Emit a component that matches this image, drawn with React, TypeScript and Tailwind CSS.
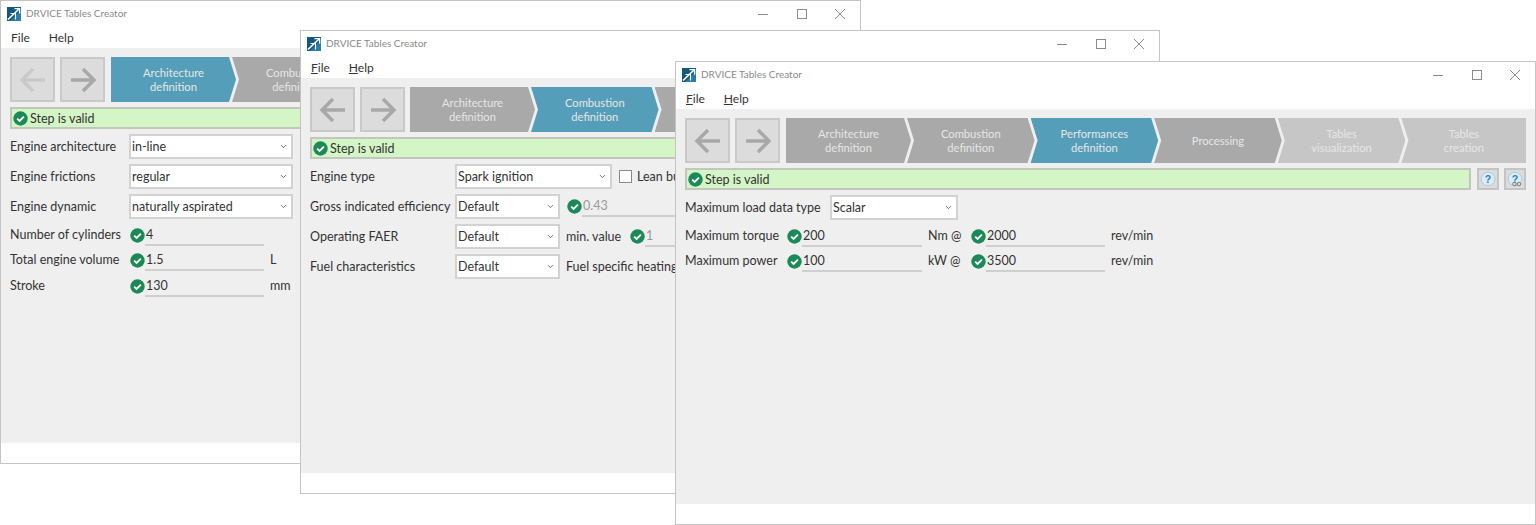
import type { ReactNode } from 'react';
import { ChevronDown } from 'lucide-react';

const STEPS = [
  ['Architecture', 'definition'],
  ['Combustion', 'definition'],
  ['Performances', 'definition'],
  ['Processing'],
  ['Tables', 'visualization'],
  ['Tables', 'creation'],
];

function Logo() {
  return (
    <svg width="14" height="14" viewBox="0 0 14 14" className="shrink-0">
      <rect width="14" height="14" fill="#14587c" />
      <path d="M14 3 V14 H3 Z" fill="#2a7ba6" />
      <path d="M1 12.5 L12 2" fill="none" stroke="#fff" strokeWidth="1.6" />
      <path d="M7.5 1.6 H12.6 V6.5" fill="none" stroke="#fff" strokeWidth="1.3" />
      <path d="M3.5 6.5 H8.5 L8.5 12.5" fill="none" stroke="#fff" strokeWidth="1.1" />
    </svg>
  );
}

function WindowControls() {
  return (
    <div className="flex items-center gap-[28.5px] pr-[15px] text-[#8c8c8c]">
      <svg width="10" height="10" viewBox="0 0 10 10"><path d="M0 5.5 H10" stroke="currentColor" /></svg>
      <svg width="10" height="10" viewBox="0 0 10 10"><rect x="0.5" y="0.5" width="9" height="9" fill="none" stroke="currentColor" /></svg>
      <svg width="10" height="10" viewBox="0 0 10 10"><path d="M0 0 L10 10 M10 0 L0 10" stroke="currentColor" /></svg>
    </div>
  );
}

function CheckIcon() {
  return (
    <svg width="15" height="15" viewBox="0 0 15 15" className="shrink-0">
      <circle cx="7.5" cy="7.5" r="7.2" fill="#1b8a58" />
      <path d="M4.2 7.6 L6.6 9.9 L10.9 5.6" fill="none" stroke="#fff" strokeWidth="1.8" />
    </svg>
  );
}

function NavButton({ direction, faded }: { direction: 'left' | 'right'; faded?: boolean }) {
  return (
    <div className="flex h-[45px] w-[45px] shrink-0 items-center justify-center border-2 border-[#c9c9c9] bg-[#dcdcdc]">
      <svg width="28" height="28" viewBox="0 0 28 28" className={faded ? 'text-[#c9c9c9]' : 'text-[#a8a8a8]'}>
        {direction === 'left' ? (
          <path d="M26 14 H3 M14 3 L3 14 L14 25" fill="none" stroke="currentColor" strokeWidth="3.4" />
        ) : (
          <path d="M2 14 H25 M14 3 L25 14 L14 25" fill="none" stroke="currentColor" strokeWidth="3.4" />
        )}
      </svg>
    </div>
  );
}

function Steps({ active, tight }: { active: number; tight?: boolean }) {
  return (
    <div className={`flex h-[45px] flex-1 ${tight ? '' : 'ml-[1px]'}`}>
      {STEPS.map((lines, i) => {
        let color = 'bg-[#a9a9a9]';
        if (i === active) color = 'bg-[#559eb9]';
        else if (i > 3) color = 'bg-[#c6c6c6]';
        let shape = 'w-[127.6px] [clip-path:polygon(0_0,calc(100%_-_7px)_0,100%_50%,calc(100%_-_7px)_100%,0_100%,7px_50%)]';
        if (i === 0) shape = 'w-[125px] [clip-path:polygon(0_0,calc(100%_-_7px)_0,100%_50%,calc(100%_-_7px)_100%,0_100%)]';
        if (i === STEPS.length - 1) shape = 'w-[125px] [clip-path:polygon(0_0,100%_0,100%_100%,0_100%,7px_50%)]';
        return (
          <div
            key={i}
            className={`flex shrink-0 flex-col items-center justify-center text-[11.2px] leading-[14px] text-[#e6e6e6] ${i > 0 ? '-ml-[4px]' : ''} ${color} ${shape}`}
          >
            {lines.map((line) => (
              <span key={line}>{line}</span>
            ))}
          </div>
        );
      })}
    </div>
  );
}

function HelpButton({ extra }: { extra?: boolean }) {
  return (
    <div className="ml-[5.5px] flex h-[22px] w-[22px] shrink-0 items-center justify-center border-2 border-[#c4c4c4] bg-[#dcdcdc]">
      <svg width="16" height="16" viewBox="0 0 16 16">
        <circle cx="8" cy="8" r="6.8" fill="#dcecf6" stroke="#a9cbe2" />
        <text x="8" y="11.8" textAnchor="middle" fontSize="10.5" fontWeight="700" fill="#2f7fb5" fontFamily="'Liberation Sans', sans-serif">?</text>
        {extra && (
          <g fill="#dcdcdc" stroke="#7d7d7d" strokeWidth="1">
            <circle cx="7.5" cy="13" r="1.8" />
            <circle cx="12" cy="13" r="1.8" />
          </g>
        )}
      </svg>
    </div>
  );
}

function Select({ value, width }: { value: string; width: string }) {
  return (
    <div className={`flex h-[24.5px] shrink-0 items-center justify-between border-2 border-[#d2d2d2] bg-white pl-[1px] pr-[3px] ${width}`}>
      <span className="pt-[2px]">{value}</span>
      <ChevronDown size={9} strokeWidth={2} className="text-[#444]" />
    </div>
  );
}

function Field({ value, width, disabled }: { value: string; width: string; disabled?: boolean }) {
  return (
    <div className="flex shrink-0 items-center">
      <CheckIcon />
      <div className={`h-[21px] border-b-2 border-[#cfcfcf] pl-[1px] leading-[19px] ${width} ${disabled ? 'text-[#9a9a9a]' : ''}`}>
        {value}
      </div>
    </div>
  );
}

function SelectRow({ label, labelWidth, children }: { label: string; labelWidth: string; children: ReactNode }) {
  return (
    <div className="flex h-[24.5px] items-center whitespace-nowrap">
      <div className={`shrink-0 pt-[2px] ${labelWidth}`}>{label}</div>
      {children}
    </div>
  );
}

function FieldRow({ label, labelWidth, children }: { label: string; labelWidth: string; children: ReactNode }) {
  return (
    <div className="flex h-[25.5px] items-center whitespace-nowrap">
      <div className={`shrink-0 ${labelWidth}`}>{label}</div>
      {children}
    </div>
  );
}

function Window({
  place,
  active,
  underlined,
  backFaded,
  tight,
  children,
}: {
  place: string;
  active: number;
  underlined?: boolean;
  backFaded?: boolean;
  tight?: boolean;
  children: ReactNode;
}) {
  return (
    <div className={`absolute flex h-[464px] flex-col border border-[#c4c4c4] bg-white ${place}`}>
      <div className="flex h-[25px] items-center justify-between pl-[6px]">
        <div className="flex items-center gap-[5px] text-[10px] text-[#8a8a8a]">
          <Logo />
          <span>DRVICE Tables Creator</span>
        </div>
        <WindowControls />
      </div>
      <div className="flex h-[22px] items-center gap-[19px] pl-[10px] pt-[1px] text-[12px] text-[#333]">
        <span>{underlined ? <><span className="underline">F</span>ile</> : 'File'}</span>
        <span>{underlined ? <><span className="underline">H</span>elp</> : 'Help'}</span>
      </div>
      <div className="flex-1 overflow-hidden bg-[#efefef] px-[9px] pt-[9px] text-[#333]">
        <div className="flex gap-[5px]">
          <NavButton direction="left" faded={backFaded} />
          <NavButton direction="right" />
          <Steps active={active} tight={tight} />
        </div>
        <div className="mt-[5px] flex h-[22px] items-center">
          <div className="flex h-full flex-1 items-center gap-[2px] border-2 border-[#c2c7bd] bg-[#d4f5c5] pl-[1px]">
            <CheckIcon />
            <span className="pt-[2px]">Step is valid</span>
          </div>
          <HelpButton />
          <HelpButton extra />
        </div>
        <div className="mt-[5px] flex flex-col">{children}</div>
      </div>
      <div className="h-[20px]" />
    </div>
  );
}

export default function App() {
  return (
    <div className="relative h-[525px] w-[1536px] overflow-hidden bg-white font-['Lato',sans-serif] text-[12.5px]">
      <Window place="left-0 top-0 w-[861px]" active={0} backFaded>
        <div className="flex flex-col gap-[5.5px]">
          <SelectRow label="Engine architecture" labelWidth="w-[119px]"><Select value="in-line" width="w-[164px]" /></SelectRow>
          <SelectRow label="Engine frictions" labelWidth="w-[119px]"><Select value="regular" width="w-[164px]" /></SelectRow>
          <SelectRow label="Engine dynamic" labelWidth="w-[119px]"><Select value="naturally aspirated" width="w-[164px]" /></SelectRow>
        </div>
        <div className="mt-[4px]">
          <FieldRow label="Number of cylinders" labelWidth="w-[120px]"><Field value="4" width="w-[119px]" /></FieldRow>
          <FieldRow label="Total engine volume" labelWidth="w-[120px]"><Field value="1.5" width="w-[119px]" /><span className="ml-[6px]">L</span></FieldRow>
          <FieldRow label="Stroke" labelWidth="w-[120px]"><Field value="130" width="w-[119px]" /><span className="ml-[6px]">mm</span></FieldRow>
        </div>
      </Window>

      <Window place="left-[300px] top-[30px] w-[860px]" active={1} underlined tight>
        <div className="flex flex-col gap-[5.5px]">
          <SelectRow label="Engine type" labelWidth="w-[145px]">
            <Select value="Spark ignition" width="w-[157px]" />
            <div className="ml-[7px] h-[13px] w-[13px] border border-[#8a8a8a] bg-white" />
            <span className="ml-[5px] pt-[2px]">Lean burn</span>
          </SelectRow>
          <SelectRow label="Gross indicated efficiency" labelWidth="w-[145px]">
            <Select value="Default" width="w-[105px]" />
            <div className="ml-[7px]"><Field value="0.43" width="w-[119px]" disabled /></div>
          </SelectRow>
          <SelectRow label="Operating FAER" labelWidth="w-[145px]">
            <Select value="Default" width="w-[105px]" />
            <span className="ml-[6px] w-[58px] pt-[2px]">min. value</span>
            <div className="ml-[6px]"><Field value="1" width="w-[119px]" disabled /></div>
          </SelectRow>
          <SelectRow label="Fuel characteristics" labelWidth="w-[145px]">
            <Select value="Default" width="w-[105px]" />
            <span className="ml-[6px] pt-[2px]">Fuel specific heating value</span>
          </SelectRow>
        </div>
      </Window>

      <Window place="left-[675px] top-[61px] w-[861px]" active={2} underlined>
        <SelectRow label="Maximum load data type" labelWidth="w-[145px]">
          <Select value="Scalar" width="w-[128px]" />
        </SelectRow>
        <div className="mt-[4px]">
          <FieldRow label="Maximum torque" labelWidth="w-[102px]">
            <Field value="200" width="w-[120px]" />
            <span className="ml-[6px] w-[43px]">Nm @</span>
            <Field value="2000" width="w-[119px]" />
            <span className="ml-[6px]">rev/min</span>
          </FieldRow>
          <FieldRow label="Maximum power" labelWidth="w-[102px]">
            <Field value="100" width="w-[120px]" />
            <span className="ml-[6px] w-[43px]">kW @</span>
            <Field value="3500" width="w-[119px]" />
            <span className="ml-[6px]">rev/min</span>
          </FieldRow>
        </div>
      </Window>
    </div>
  );
}
